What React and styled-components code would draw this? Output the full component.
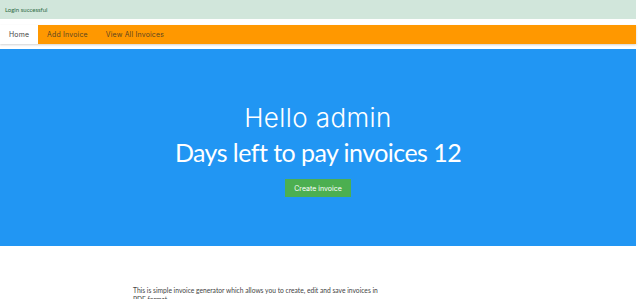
import React from "react";
import styled, { createGlobalStyle } from "styled-components";

const Global = createGlobalStyle`
  html, body { margin: 0; padding: 0; background: #fff; }
  body { font-family: "Lato", "Liberation Sans", sans-serif; overflow: hidden; }
  * { box-sizing: border-box; }
`;

const Page = styled.div`
  width: 636px;
`;

const Alert = styled.div`
  height: 19px;
  background: #d1e6db;
  color: #2e6b45;
  font-size: 6px;
  padding: 6px 5px 0;
  margin-bottom: 6px;
`;

const Nav = styled.nav`
  display: flex;
  align-items: stretch;
  height: 19px;
  background: #ff9800;
  box-shadow: 0 1px 2px rgba(0, 0, 0, 0.18);
  margin-bottom: 5px;
`;

const NavItem = styled.a`
  display: flex;
  align-items: center;
  padding: 0 9px;
  font-family: "Inter", "DejaVu Sans", sans-serif;
  font-size: 6.9px;
  letter-spacing: 0.2px;
  color: ${(p) => (p.$active ? "#444" : "#5a4520")};
  background: ${(p) => (p.$active ? "#fff" : "transparent")};
  text-decoration: none;
`;

const Hero = styled.section`
  height: 197px;
  background: #2196f3;
  display: flex;
  flex-direction: column;
  align-items: center;
  padding-top: 53px;
  color: #fff;
`;

const Hello = styled.h1`
  margin: 0;
  font-family: "Inter", "DejaVu Sans", sans-serif;
  font-weight: 300;
  font-size: 26px;
  letter-spacing: 0.4px;
  line-height: 32px;
`;

const Days = styled.h2`
  margin: 2px 0 0;
  font-family: "Lato", sans-serif;
  font-weight: 400;
  font-size: 25px;
  letter-spacing: -0.55px;
  line-height: 32px;
`;

const Button = styled.button`
  margin-top: 11px;
  width: 66px;
  height: 18px;
  border: none;
  background: #4caf50;
  color: #fff;
  font-family: "Inter", "DejaVu Sans", sans-serif;
  font-size: 7px;
  padding: 0;
`;

const Content = styled.div`
  margin: 40px 0 0 133px;
  width: 252px;
  font-size: 6.7px;
  line-height: 8.5px;
  color: #444;
`;

export default function App() {
  return (
    <Page>
      <Global />
      <Alert>Login successful</Alert>
      <Nav>
        <NavItem $active>Home</NavItem>
        <NavItem>Add Invoice</NavItem>
        <NavItem>View All Invoices</NavItem>
      </Nav>
      <Hero>
        <Hello>Hello admin</Hello>
        <Days>Days left to pay invoices 12</Days>
        <Button>Create invoice</Button>
      </Hero>
      <Content>
        This is simple invoice generator which allows you to create, edit and
        save invoices in PDF format.
      </Content>
    </Page>
  );
}
